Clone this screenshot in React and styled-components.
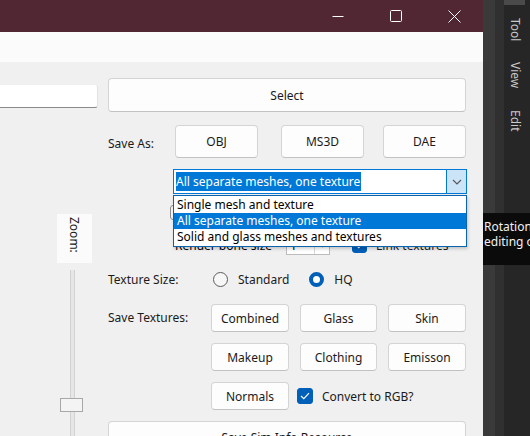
import React from 'react';
import styled, { createGlobalStyle } from 'styled-components';

const GlobalStyle = createGlobalStyle`
  html, body {
    margin: 0;
    padding: 0;
    background: #262626;
  }
  body {
    font-family: "Noto Sans", "Open Sans", sans-serif;
    font-size: 12px;
    color: #000;
  }
`;

const App = () => {
  return (
    <>
      <GlobalStyle />
      <Screen>
        <Window>
          <TitleBar>
            <CaptionButton>
              <svg width="12" height="12" viewBox="0 0 12 12">
                <line x1="0.5" y1="6.5" x2="11.5" y2="6.5" stroke="#fff" strokeWidth="1" />
              </svg>
            </CaptionButton>
            <CaptionButton>
              <svg width="12" height="12" viewBox="0 0 12 12">
                <rect x="0.5" y="0.5" width="11" height="11" rx="1" fill="none" stroke="#fff" strokeWidth="1" />
              </svg>
            </CaptionButton>
            <CaptionButton>
              <svg width="13" height="13" viewBox="0 0 13 13">
                <path d="M0.5 0.5 L12.5 12.5 M12.5 0.5 L0.5 12.5" stroke="#fff" strokeWidth="1" />
              </svg>
            </CaptionButton>
          </TitleBar>
          <MenuStrip />
          <Body>
            <LeftColumn>
              <PathBox />
              <ZoomLabel>
                <span>Zoom:</span>
              </ZoomLabel>
              <Slider>
                <Track />
                <Thumb />
              </Slider>
            </LeftColumn>

            <Form>
              <WideButton $h={34} $top={16}>Select</WideButton>

              <SaveAsRow>
                <Label>Save As:</Label>
                <Button>OBJ</Button>
                <Button>MS3D</Button>
                <Button>DAE</Button>
              </SaveAsRow>

              <ComboWrap>
                <Combo>
                  <ComboText>
                    <Highlight>All separate meshes, one texture</Highlight>
                  </ComboText>
                  <ComboArrow>
                    <svg width="10" height="6" viewBox="0 0 10 6">
                      <path d="M1 1 L5 5 L9 1" fill="none" stroke="#555" strokeWidth="1.1" />
                    </svg>
                  </ComboArrow>
                </Combo>
                <DropList>
                  <DropItem>Single mesh and texture</DropItem>
                  <DropItem $selected>All separate meshes, one texture</DropItem>
                  <DropItem>Solid and glass meshes and textures</DropItem>
                </DropList>
              </ComboWrap>

              <HiddenRow>
                <CheckBox />
              </HiddenRow>

              <BoneRow>
                <BoneLabel>Render bone size</BoneLabel>
                <Spinner>
                  <SpinValue>1</SpinValue>
                  <SpinArrow>
                    <svg width="7" height="5" viewBox="0 0 7 5">
                      <path d="M0 0 L7 0 L3.5 4.5 Z" fill="#222" />
                    </svg>
                  </SpinArrow>
                </Spinner>
                <CheckBox $checked>
                  <CheckMark />
                </CheckBox>
                <CheckText>Link textures</CheckText>
              </BoneRow>

              <TextureSizeRow>
                <Label $w={105}>Texture Size:</Label>
                <Radio />
                <RadioText $gap={20}>Standard</RadioText>
                <Radio $checked />
                <RadioText>HQ</RadioText>
              </TextureSizeRow>

              <TextureGrid>
                <GridLabel>Save Textures:</GridLabel>
                <Button>Combined</Button>
                <Button>Glass</Button>
                <Button>Skin</Button>
                <span />
                <Button>Makeup</Button>
                <Button>Clothing</Button>
                <Button>Emisson</Button>
                <span />
                <Button>Normals</Button>
                <ConvertCell>
                  <CheckBox $checked $size={16}>
                    <CheckMark />
                  </CheckBox>
                  <CheckText>Convert to RGB?</CheckText>
                </ConvertCell>
              </TextureGrid>

              <WideButton $h={26} $top={11}>Save Sim Info Resource</WideButton>
            </Form>
          </Body>
        </Window>

        <SidePanel>
          <StripeA />
          <StripeB />
          <SideTabs>
            <TabTop />
            <SideTab>Tool</SideTab>
            <SideTab>View</SideTab>
            <SideTab>Edit</SideTab>
          </SideTabs>
        </SidePanel>

        <Tooltip>
          <TipLine>Rotation</TipLine>
          <TipLine>editing o</TipLine>
        </Tooltip>
      </Screen>
    </>
  );
};

const CheckMark = () => (
  <svg width="10" height="8" viewBox="0 0 10 8">
    <path d="M1 4 L3.8 6.6 L9 1.2" fill="none" stroke="#fff" strokeWidth="1.2" />
  </svg>
);

const Screen = styled.div`
  position: relative;
  width: 530px;
  height: 436px;
  display: flex;
  overflow: hidden;
`;

const Window = styled.div`
  width: 483px;
  flex-shrink: 0;
  height: 100%;
  display: flex;
  flex-direction: column;
  background: #f0f0f0;
`;

const TitleBar = styled.div`
  height: 32px;
  flex-shrink: 0;
  background: #512734;
  display: flex;
  justify-content: flex-end;
`;

const CaptionButton = styled.div`
  width: 58px;
  height: 32px;
  display: flex;
  align-items: center;
  justify-content: center;
`;

const MenuStrip = styled.div`
  height: 30px;
  flex-shrink: 0;
  background: #fbfbfb;
`;

const Body = styled.div`
  flex: 1;
  display: flex;
  min-height: 0;
  overflow: hidden;
`;

const LeftColumn = styled.div`
  width: 108px;
  flex-shrink: 0;
  display: flex;
  flex-direction: column;

  & > * {
    flex-shrink: 0;
  }
`;

const PathBox = styled.div`
  margin-top: 23px;
  width: 98px;
  height: 23px;
  box-sizing: border-box;
  background: #fff;
  border-bottom: 1px solid #8a8a8a;
  border-right: 1px solid #e2e2e2;
  border-radius: 0 3px 3px 0;
`;

const ZoomLabel = styled.div`
  margin-top: 106px;
  margin-left: 57px;
  width: 35px;
  height: 49px;
  background: #fbfbfb;
  display: flex;
  justify-content: center;
  padding-top: 3px;
  box-sizing: border-box;

  span {
    writing-mode: vertical-rl;
    font-size: 12px;
    color: #1a1a1a;
  }
`;

const Slider = styled.div`
  position: relative;
  margin-top: 7px;
  margin-left: 60px;
  width: 24px;
  height: 200px;
`;

const Track = styled.div`
  margin-left: 10px;
  width: 3px;
  height: 100%;
  background: #e6e6e6;
  border-left: 1px solid #d2d2d2;
  border-right: 1px solid #d2d2d2;
`;

const Thumb = styled.div`
  position: absolute;
  left: 0;
  top: 128px;
  width: 23px;
  height: 14px;
  box-sizing: border-box;
  background: #f4f4f4;
  border: 1px solid #a8a8a8;
`;

const Form = styled.div`
  width: 359px;
  display: flex;
  flex-direction: column;

  & > * {
    flex-shrink: 0;
  }
`;

const Button = styled.div`
  height: 100%;
  box-sizing: border-box;
  background: #fdfdfd;
  border: 1px solid #d4d4d4;
  border-bottom-color: #c2c2c2;
  border-radius: 4px;
  display: flex;
  align-items: center;
  justify-content: center;
  font-size: 12px;
  color: #1b1b1b;
  white-space: nowrap;
`;

const WideButton = styled(Button)`
  height: ${(p) => p.$h}px;
  margin-top: ${(p) => p.$top}px;
  width: 358px;
  align-items: ${(p) => (p.$h < 30 ? 'flex-end' : 'center')};
  overflow: hidden;
`;

const Label = styled.div`
  width: ${(p) => (p.$w ? `${p.$w}px` : 'auto')};
  font-size: 12px;
  color: #1b1b1b;
  white-space: nowrap;
`;

const SaveAsRow = styled.div`
  margin-top: 13px;
  height: 33px;
  display: grid;
  grid-template-columns: 46px 83px 83px 83px;
  column-gap: 21px;
  align-items: stretch;

  ${Label} {
    align-self: center;
    padding-top: 3px;
  }
  ${Button}:nth-child(3) {
    margin-left: 2px;
    margin-right: -2px;
  }
`;

const ComboWrap = styled.div`
  position: relative;
  margin-top: 11px;
  margin-left: 65px;
  width: 294px;
  height: 25px;
  z-index: 2;
`;

const Combo = styled.div`
  height: 100%;
  box-sizing: border-box;
  background: #fff;
  border: 1px solid #0078d7;
  display: flex;
`;

const ComboText = styled.div`
  flex: 1;
  display: flex;
  align-items: center;
  padding-left: 2px;
`;

const Highlight = styled.span`
  background: #0078d7;
  color: #fff;
  line-height: 19px;
  padding-right: 1px;
`;

const ComboArrow = styled.div`
  width: 19px;
  background: #cce4f7;
  border-left: 1px solid #0078d7;
  display: flex;
  align-items: center;
  justify-content: center;
`;

const DropList = styled.div`
  position: absolute;
  left: 0;
  top: 26px;
  width: 294px;
  box-sizing: border-box;
  background: #fff;
  border: 1px solid #0a64ad;
  padding: 1px 0;
  box-shadow: 1px 2px 3px rgba(0, 0, 0, 0.18);
`;

const DropItem = styled.div`
  height: 16px;
  line-height: 16px;
  padding-left: 3px;
  font-size: 12px;
  background: ${(p) => (p.$selected ? '#0078d7' : 'transparent')};
  color: ${(p) => (p.$selected ? '#fff' : '#000')};
`;

const HiddenRow = styled.div`
  margin-top: 11px;
  height: 14px;
  padding-left: 62px;
  display: flex;
`;

const CheckBox = styled.div`
  width: ${(p) => p.$size || 15}px;
  height: ${(p) => p.$size || 15}px;
  flex-shrink: 0;
  box-sizing: border-box;
  border-radius: 3px;
  background: ${(p) => (p.$checked ? '#005fb8' : '#f7f7f7')};
  border: 1px solid ${(p) => (p.$checked ? '#005fb8' : '#8d8d8d')};
  display: flex;
  align-items: center;
  justify-content: center;
`;

const BoneRow = styled.div`
  margin-top: 16px;
  height: 20px;
  padding-left: 67px;
  display: flex;
  align-items: center;

  ${CheckBox} {
    margin-left: 22px;
  }
`;

const BoneLabel = styled.div`
  width: 111px;
  font-size: 12px;
  white-space: nowrap;
`;

const Spinner = styled.div`
  width: 44px;
  height: 20px;
  box-sizing: border-box;
  background: #fff;
  border: 1px solid #bcbcbc;
  display: flex;
  align-items: center;
`;

const SpinValue = styled.div`
  flex: 1;
  padding-left: 3px;
`;

const SpinArrow = styled.div`
  width: 14px;
  height: 100%;
  border-left: 1px solid #d8d8d8;
  display: flex;
  align-items: center;
  justify-content: center;
`;

const CheckText = styled.div`
  margin-left: 9px;
  font-size: 12px;
  color: #1b1b1b;
  white-space: nowrap;
`;

const TextureSizeRow = styled.div`
  margin-top: 14px;
  height: 20px;
  display: flex;
  align-items: center;
`;

const Radio = styled.div`
  width: 15px;
  height: 15px;
  flex-shrink: 0;
  box-sizing: border-box;
  border-radius: 50%;
  background: ${(p) => (p.$checked ? '#fff' : '#f7f7f7')};
  border: ${(p) => (p.$checked ? '4.5px solid #005fb8' : '1px solid #5c5c5c')};
`;

const RadioText = styled.div`
  margin-left: 10px;
  margin-right: ${(p) => p.$gap || 0}px;
  font-size: 12px;
  color: #1b1b1b;
`;

const TextureGrid = styled.div`
  margin-top: 15px;
  display: grid;
  grid-template-columns: 92px 78px 77px 78px;
  grid-auto-rows: 28px;
  column-gap: 11px;
  row-gap: 11px;
  align-items: stretch;
`;

const GridLabel = styled(Label)`
  align-self: center;
  padding-bottom: 1px;
`;

const ConvertCell = styled.div`
  grid-column: 3 / span 2;
  display: flex;
  align-items: center;
  margin-left: -3px;

  ${CheckText} {
    margin-left: 9px;
  }
`;

const SidePanel = styled.div`
  flex: 1;
  display: flex;
  height: 100%;
`;

const StripeA = styled.div`
  width: 12px;
  background: #3a3a3a;
`;

const StripeB = styled.div`
  width: 9px;
  background: #303030;
`;

const SideTabs = styled.div`
  flex: 1;
  background: #262626;
  display: flex;
  flex-direction: column;
  align-items: flex-start;
`;

const TabTop = styled.div`
  width: 21px;
  height: 5px;
  background: #4a4a4a;
  margin-bottom: 13px;
`;

const SideTab = styled.div`
  writing-mode: vertical-rl;
  margin-left: 3px;
  margin-bottom: 21px;
  font-size: 12px;
  color: #c8c8c8;
`;

const Tooltip = styled.div`
  position: absolute;
  left: 483px;
  top: 213px;
  width: 47px;
  height: 52px;
  box-sizing: border-box;
  padding: 6px 0 0 1px;
  background: #0b0b0b;
  overflow: hidden;
  z-index: 3;
`;

const TipLine = styled.div`
  color: #f2f2f2;
  font-size: 12px;
  line-height: 15px;
  white-space: nowrap;
`;

export default App;
